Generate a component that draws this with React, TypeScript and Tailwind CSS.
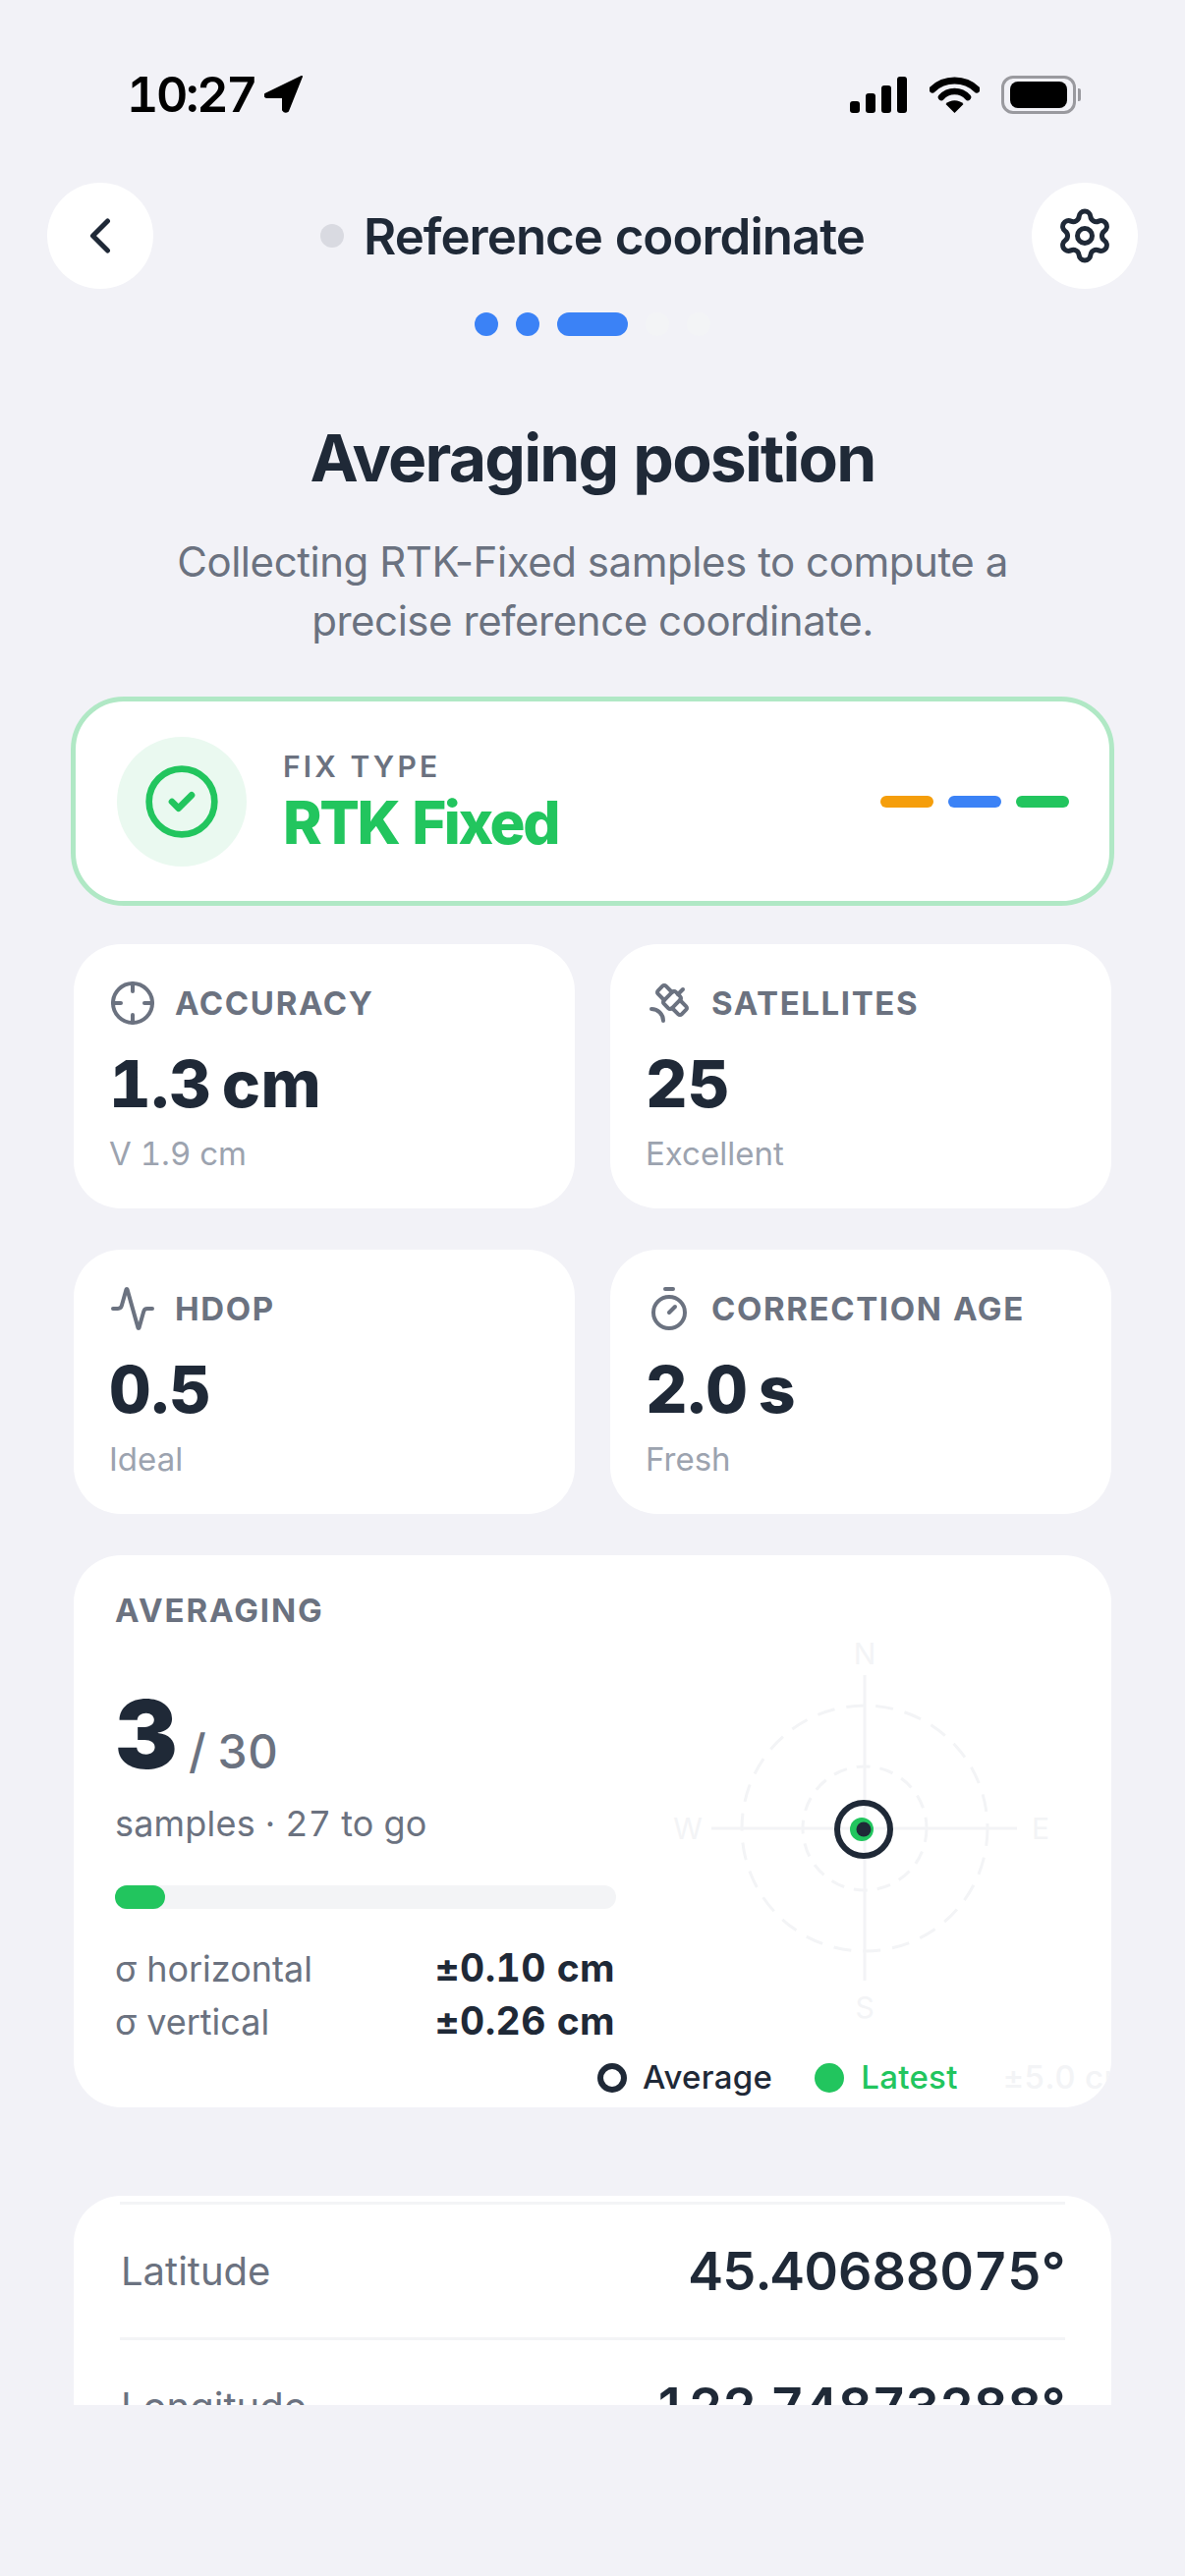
import { Activity, ChevronLeft, CircleCheck, Crosshair, Satellite, Settings, Timer } from "lucide-react";
import type { ReactNode } from "react";

const stats = [
  { label: "ACCURACY", value: "1.3 cm", sub: "V 1.9 cm", icon: <Crosshair size={48} strokeWidth={2} /> },
  { label: "SATELLITES", value: "25", sub: "Excellent", icon: <Satellite size={48} strokeWidth={2} /> },
  { label: "HDOP", value: "0.5", sub: "Ideal", icon: <Activity size={48} strokeWidth={2} /> },
  { label: "CORRECTION AGE", value: "2.0 s", sub: "Fresh", icon: <Timer size={48} strokeWidth={2} /> },
];

function StatusBar() {
  return (
    <div className="flex h-[76px] items-center justify-between pl-[129px] pr-[106px] pt-[58px] box-content">
      <div className="flex items-center gap-[9px]">
        <span className="text-[50px] font-semibold leading-none tracking-[-2.3px] text-black">10:27</span>
        <svg width="40" height="38" viewBox="0 0 40 38">
          <path d="M38 1 L1 19 Q0 22 3 22 L19 22 L19 35 Q21 38 24 36 Z" fill="#000" stroke="#000" strokeWidth="2" strokeLinejoin="round" />
        </svg>
      </div>
      <div className="flex items-center">
        <svg width="58" height="37" viewBox="0 0 58 37" className="mr-[23px]">
          <rect x="0" y="25" width="10" height="12" rx="3" fill="#000" />
          <rect x="16" y="17" width="10" height="20" rx="3" fill="#000" />
          <rect x="32" y="9" width="10" height="28" rx="3" fill="#000" />
          <rect x="48" y="0" width="10" height="37" rx="3" fill="#000" />
        </svg>
        <svg width="51" height="37" viewBox="0 0 51 37" className="mr-[22px]">
          <path d="M3 13 C15 1 36 1 48 13" fill="none" stroke="#000" strokeWidth="7" strokeLinecap="round" />
          <path d="M12 21 C19 13 32 13 39 21" fill="none" stroke="#000" strokeWidth="6.5" strokeLinecap="round" />
          <path d="M25.5 37 L16.5 28 C21 23 30 23 34.5 28 Z" fill="#000" />
        </svg>
        <div className="flex items-center">
          <div className="flex h-[39px] w-[76px] items-center justify-center rounded-[12px] border-[3px] border-[#9a9a9f]">
            <div className="h-[27px] w-[58px] rounded-[8px] bg-black" />
          </div>
          <div className="ml-[2px] h-[13px] w-[3px] rounded-r-[2px] bg-[#9a9a9f]" />
        </div>
      </div>
    </div>
  );
}

function Header() {
  return (
    <div className="mt-[52px]">
      <div className="flex items-center justify-between px-[48px]">
        <div className="flex h-[108px] w-[108px] items-center justify-center rounded-full bg-white text-[#1f2937]">
          <ChevronLeft size={60} strokeWidth={2} />
        </div>
        <div className="flex items-center gap-[20px]">
          <span className="h-[24px] w-[24px] rounded-full bg-[#d9dae1]" />
          <span className="text-[51px] font-semibold leading-none tracking-[-1px] text-[#1f2937]">Reference coordinate</span>
        </div>
        <div className="flex h-[108px] w-[108px] items-center justify-center rounded-full bg-white text-[#1f2937]">
          <Settings size={60} strokeWidth={2} />
        </div>
      </div>
      <div className="ml-[483px] mt-[24px] flex h-[24px] gap-[18px]">
        <span className="w-[24px] rounded-full bg-[#3b82f6]" />
        <span className="w-[24px] rounded-full bg-[#3b82f6]" />
        <span className="w-[72px] rounded-full bg-[#3b82f6]" />
        <span className="w-[24px] rounded-full bg-[#f3f4f6]" />
        <span className="w-[24px] rounded-full bg-[#f3f4f6]" />
      </div>
    </div>
  );
}

function FixCard() {
  return (
    <div className="-mx-[3px] mt-[47px] flex h-[213px] items-center justify-between rounded-[54px] border-[5px] border-[#b0e8c5] bg-white pl-[42px] pr-[41px]">
      <div className="flex items-center gap-[37px]">
        <div className="flex h-[132px] w-[132px] items-center justify-center rounded-full bg-[#eaf9f0] text-[#22c55e]">
          <CircleCheck size={80} strokeWidth={2} />
        </div>
        <div>
          <div className="text-[30px] font-semibold leading-[36px] tracking-[3.2px] text-[#6b7280]">FIX TYPE</div>
          <div className="mt-[6px] text-[60px] font-extrabold leading-[66px] tracking-[-2.4px] text-[#22c55e]">RTK Fixed</div>
        </div>
      </div>
      <div className="flex gap-[15px]">
        <span className="h-[12px] w-[54px] rounded-full bg-[#f59e0b]" />
        <span className="h-[12px] w-[54px] rounded-full bg-[#3b82f6]" />
        <span className="h-[12px] w-[54px] rounded-full bg-[#22c55e]" />
      </div>
    </div>
  );
}

function StatCard({ label, value, sub, icon }: { label: string; value: string; sub: string; icon: ReactNode }) {
  return (
    <div className="h-[269px] rounded-[48px] bg-white pl-[36px] pt-[36px]">
      <div className="flex h-[48px] items-center gap-[19px] text-[#6b7280]">
        {icon}
        <span className="text-[33px] font-bold leading-none tracking-[1.6px]">{label}</span>
      </div>
      <div className="mt-[25px] text-[66px] font-extrabold leading-[66px] tracking-[0.5px] [word-spacing:-8px] text-[#1f2937]">{value}</div>
      <div className="mt-[18px] text-[33px] leading-[40px] text-[#9ca3af]">{sub}</div>
    </div>
  );
}

function Compass() {
  const line = "#f3f4f6";
  return (
    <svg width="400" height="400" viewBox="0 0 400 400" className="ml-[53px] mt-[42px] shrink-0">
      <circle cx="200" cy="200" r="125" fill="none" stroke={line} strokeWidth="3" strokeDasharray="18 12" />
      <circle cx="200" cy="200" r="63" fill="none" stroke={line} strokeWidth="3" strokeDasharray="14 10" />
      <line x1="44" y1="200" x2="355" y2="200" stroke={line} strokeWidth="3" />
      <line x1="200" y1="44" x2="200" y2="355" stroke={line} strokeWidth="3" />
      <text x="200" y="33" textAnchor="middle" fontSize="30" fill={line}>N</text>
      <text x="200" y="393" textAnchor="middle" fontSize="30" fill={line}>S</text>
      <text x="20" y="211" textAnchor="middle" fontSize="30" fill={line}>W</text>
      <text x="379" y="211" textAnchor="middle" fontSize="30" fill={line}>E</text>
      <circle cx="199" cy="201" r="27" fill="none" stroke="#1f2937" strokeWidth="6" />
      <circle cx="197" cy="201" r="12" fill="#22c55e" />
      <circle cx="199" cy="201" r="7.5" fill="#1f2937" />
    </svg>
  );
}

function AveragingCard() {
  return (
    <div className="mt-[42px] h-[562px] overflow-hidden rounded-[48px] bg-white pt-[36px]">
      <div className="flex">
        <div className="ml-[42px] w-[510px] shrink-0">
          <div className="text-[33px] font-bold leading-[40px] tracking-[1.9px] text-[#6b7280]">AVERAGING</div>
          <div className="mt-[58px] flex items-baseline gap-[12px] pl-[1px]">
            <span className="text-[96px] font-black leading-[96px] text-[#1f2937]">3</span>
            <span className="text-[48px] font-medium leading-none tracking-[-0.5px] text-[#6b7280]">/ 30</span>
          </div>
          <div className="mt-[21px] text-[36px] leading-[44px] tracking-[0.2px] text-[#6b7280]">samples · 27 to go</div>
          <div className="mt-[41px] h-[24px] rounded-full bg-[#f3f4f6]">
            <div className="h-full rounded-full bg-[#22c55e]" style={{ width: `${(3 / 30) * 100}%` }} />
          </div>
          <div className="mt-[33px] flex items-baseline justify-between pr-[1px] text-[36px] leading-[53px]">
            <span className="text-[#6b7280]">σ horizontal</span>
            <span className="text-[39px] font-bold tracking-[0.4px] text-[#1f2937]">±0.10 cm</span>
          </div>
          <div className="-mt-[1px] flex items-baseline justify-between pr-[1px] text-[36px] leading-[53px]">
            <span className="text-[#6b7280]">σ vertical</span>
            <span className="text-[39px] font-bold tracking-[0.4px] text-[#1f2937]">±0.26 cm</span>
          </div>
        </div>
        <Compass />
      </div>
      <div className="ml-[533px] mt-[10px] flex h-[40px] items-center whitespace-nowrap text-[33px] font-medium tracking-[0.3px]">
        <span className="h-[30px] w-[30px] shrink-0 rounded-full border-[6px] border-[#1f2937]" />
        <span className="ml-[16px] text-[#1f2937]">Average</span>
        <span className="ml-[43px] h-[30px] w-[30px] shrink-0 rounded-full bg-[#22c55e]" />
        <span className="ml-[17px] text-[#22c55e]">Latest</span>
        <span className="ml-[46px] text-[#f3f4f6]">±5.0 cm</span>
      </div>
    </div>
  );
}

function CoordinateCard() {
  return (
    <div className="mt-[90px] rounded-t-[48px] bg-white px-[47px] pt-[6px]">
      <div className="flex h-[138px] items-center justify-between border-t-[3px] border-[#f3f4f6]">
        <span className="pl-[1px] text-[40px] leading-none text-[#6b7280]">Latitude</span>
        <span className="text-[54px] font-semibold leading-none tracking-[-0.45px] text-[#1f2937]">45.40688075°</span>
      </div>
      <div className="flex h-[138px] items-center justify-between border-t-[3px] border-[#f3f4f6]">
        <span className="pl-[1px] text-[40px] leading-none text-[#6b7280]">Longitude</span>
        <span className="text-[54px] font-semibold leading-none tracking-[-0.45px] text-[#1f2937]">122.74873288°</span>
      </div>
    </div>
  );
}

export default function App() {
  return (
    <div className="h-[2622px] overflow-hidden bg-[#f2f2f7] tabular-nums [font-family:Inter,sans-serif]">
      <StatusBar />
      <Header />
      <div className="h-[2106px] overflow-hidden pt-[91px]">
        <h1 className="text-center text-[66px] font-bold leading-[66px] tracking-[-1.8px] text-[#1f2937]">Averaging position</h1>
        <p className="normal-nums mt-[43px] text-center text-[42px] leading-[60px] tracking-[-0.45px] text-[#6b7280]">
          Collecting RTK-Fixed samples to compute a
          <br />
          precise reference coordinate.
        </p>
        <div className="mx-[75px]">
          <FixCard />
          <div className="mt-[39px] grid grid-cols-2 gap-x-[36px] gap-y-[42px]">
            {stats.map((s) => (
              <StatCard key={s.label} {...s} />
            ))}
          </div>
          <AveragingCard />
          <CoordinateCard />
        </div>
      </div>
    </div>
  );
}
